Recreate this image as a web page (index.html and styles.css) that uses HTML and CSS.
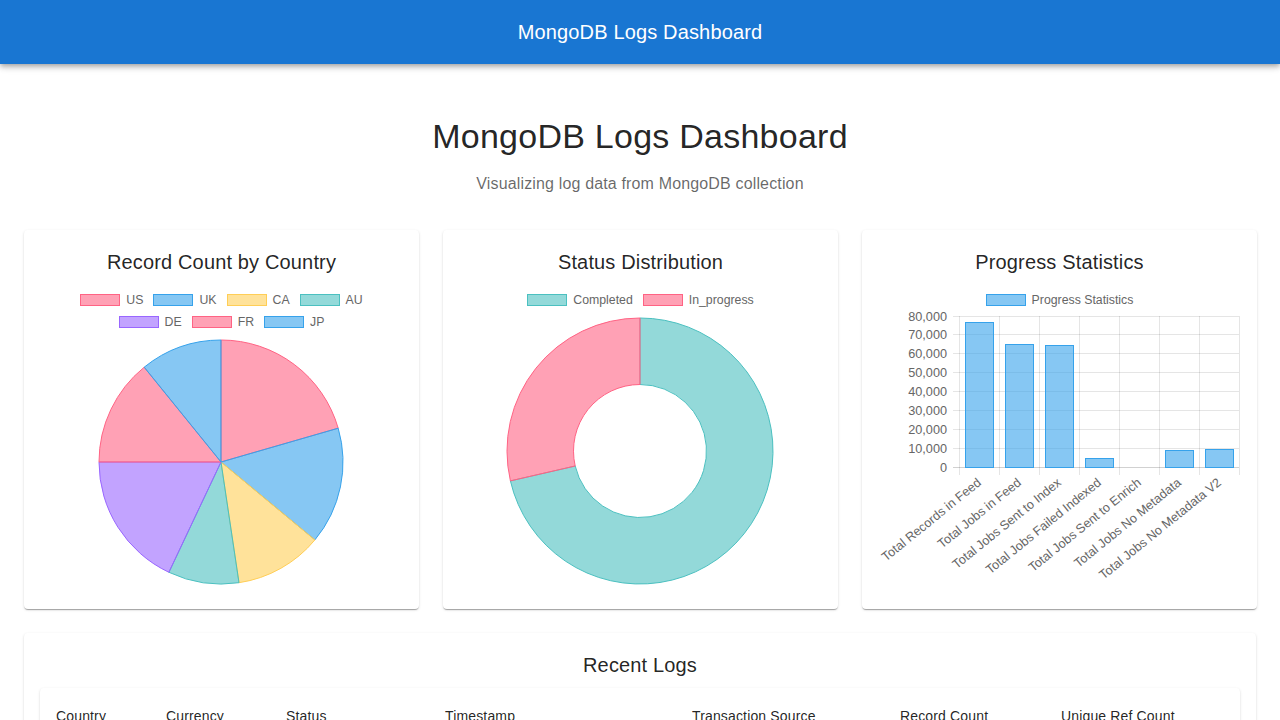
FILE: index.html
```html
<!DOCTYPE html>
<html lang="en">
<head>
<meta charset="utf-8">
<title>MongoDB Logs Dashboard</title>
<link rel="stylesheet" href="styles.css">
</head>
<body>
<header class="appbar">
  <div class="appbar-title">MongoDB Logs Dashboard</div>
</header>

<main class="main">
  <section class="intro">
    <h1 class="page-title">MongoDB Logs Dashboard</h1>
    <p class="page-subtitle">Visualizing log data from MongoDB collection</p>
  </section>

  <section class="cards">
    <div class="card">
      <h2 class="card-title">Record Count by Country</h2>
      <div class="chart">
        <div class="legend legend-wrap">
          <span class="legend-item"><i class="swatch sw-pink"></i>US</span>
          <span class="legend-item"><i class="swatch sw-blue"></i>UK</span>
          <span class="legend-item"><i class="swatch sw-yellow"></i>CA</span>
          <span class="legend-item"><i class="swatch sw-teal"></i>AU</span>
          <span class="legend-item"><i class="swatch sw-purple"></i>DE</span>
          <span class="legend-item"><i class="swatch sw-pink"></i>FR</span>
          <span class="legend-item"><i class="swatch sw-blue"></i>JP</span>
        </div>
        <svg class="plot plot-pie" width="363" height="255">
          <path class="s-pink" d="M181,124 L181,2 A122,122 0 0 1 298.2,90.2 Z"/>
          <path class="s-blue" d="M181,124 L298.2,90.2 A122,122 0 0 1 274.9,201.9 Z"/>
          <path class="s-yellow" d="M181,124 L274.9,201.9 A122,122 0 0 1 199,244.7 Z"/>
          <path class="s-teal" d="M181,124 L199,244.7 A122,122 0 0 1 128.9,234.3 Z"/>
          <path class="s-purple" d="M181,124 L128.9,234.3 A122,122 0 0 1 59,124 Z"/>
          <path class="s-pink" d="M181,124 L59,124 A122,122 0 0 1 104.2,29.2 Z"/>
          <path class="s-blue" d="M181,124 L104.2,29.2 A122,122 0 0 1 181,2 Z"/>
        </svg>
      </div>
    </div>

    <div class="card">
      <h2 class="card-title">Status Distribution</h2>
      <div class="chart">
        <div class="legend">
          <span class="legend-item"><i class="swatch sw-teal"></i>Completed</span>
          <span class="legend-item"><i class="swatch sw-pink"></i>In_progress</span>
        </div>
        <svg class="plot plot-donut" width="363" height="277">
          <path class="s-teal" d="M181,2 A133,133 0 1 1 51.4,164.9 L116.2,150 A66.5,66.5 0 1 0 181,68.5 Z"/>
          <path class="s-pink" d="M51.4,164.9 A133,133 0 0 1 181,2 L181,68.5 A66.5,66.5 0 0 0 116.2,150 Z"/>
        </svg>
      </div>
    </div>

    <div class="card">
      <h2 class="card-title">Progress Statistics</h2>
      <div class="chart">
        <div class="legend">
          <span class="legend-item"><i class="swatch sw-blue"></i>Progress Statistics</span>
        </div>
        <svg class="plot plot-bar" width="363" height="277">
          <g class="grid">
            <line x1="75" y1="0" x2="361" y2="0"/>
            <line x1="75" y1="18.9" x2="361" y2="18.9"/>
            <line x1="75" y1="37.75" x2="361" y2="37.75"/>
            <line x1="75" y1="56.6" x2="361" y2="56.6"/>
            <line x1="75" y1="75.5" x2="361" y2="75.5"/>
            <line x1="75" y1="94.4" x2="361" y2="94.4"/>
            <line x1="75" y1="113.25" x2="361" y2="113.25"/>
            <line x1="75" y1="132.1" x2="361" y2="132.1"/>
            <line x1="81" y1="0" x2="81" y2="159"/>
            <line x1="121" y1="0" x2="121" y2="159"/>
            <line x1="161" y1="0" x2="161" y2="159"/>
            <line x1="201" y1="0" x2="201" y2="159"/>
            <line x1="241" y1="0" x2="241" y2="159"/>
            <line x1="281" y1="0" x2="281" y2="159"/>
            <line x1="321" y1="0" x2="321" y2="159"/>
            <line x1="361" y1="0" x2="361" y2="159"/>
          </g>
          <line class="axis" x1="75" y1="151" x2="361" y2="151"/>
          <g class="ylabels">
            <text x="69" y="4.5">80,000</text>
            <text x="69" y="23.4">70,000</text>
            <text x="69" y="42.25">60,000</text>
            <text x="69" y="61.1">50,000</text>
            <text x="69" y="80">40,000</text>
            <text x="69" y="98.9">30,000</text>
            <text x="69" y="117.75">20,000</text>
            <text x="69" y="136.6">10,000</text>
            <text x="69" y="155.5">0</text>
          </g>
          <g class="bars">
            <rect x="87" y="6" width="28" height="145"/>
            <rect x="127" y="28" width="28" height="123"/>
            <rect x="167" y="29.5" width="28" height="121.5"/>
            <rect x="207" y="142" width="28" height="9"/>
            <rect x="287" y="134" width="28" height="17"/>
            <rect x="327" y="133" width="28" height="18"/>
          </g>
          <g class="xlabels">
            <text transform="translate(104,168) rotate(-39)">Total Records in Feed</text>
            <text transform="translate(144,168) rotate(-39)">Total Jobs in Feed</text>
            <text transform="translate(184,168) rotate(-39)">Total Jobs Sent to Index</text>
            <text transform="translate(224,168) rotate(-39)">Total Jobs Failed Indexed</text>
            <text transform="translate(264,168) rotate(-39)">Total Jobs Sent to Enrich</text>
            <text transform="translate(304,168) rotate(-39)">Total Jobs No Metadata</text>
            <text transform="translate(344,168) rotate(-39)">Total Jobs No Metadata V2</text>
          </g>
        </svg>
      </div>
    </div>
  </section>

  <section class="card logs">
    <h2 class="card-title">Recent Logs</h2>
    <div class="table-paper">
      <table class="log-table">
        <colgroup>
          <col class="c-country"><col class="c-currency"><col class="c-status"><col class="c-time">
          <col class="c-source"><col class="c-count"><col class="c-unique">
        </colgroup>
        <thead>
          <tr>
            <th>Country</th><th>Currency</th><th>Status</th><th>Timestamp</th>
            <th>Transaction Source</th><th>Record Count</th><th>Unique Ref Count</th>
          </tr>
        </thead>
        <tbody>
          <tr><td>US</td><td>USD</td><td>completed</td><td>2024-05-12 10:23:45</td><td>feed</td><td>15,230</td><td>14,980</td></tr>
          <tr><td>UK</td><td>GBP</td><td>completed</td><td>2024-05-12 10:18:02</td><td>feed</td><td>12,410</td><td>12,105</td></tr>
          <tr><td>CA</td><td>CAD</td><td>in_progress</td><td>2024-05-12 10:11:37</td><td>api</td><td>6,820</td><td>6,702</td></tr>
        </tbody>
      </table>
    </div>
  </section>
</main>
</body>
</html>
```

FILE: styles.css
```css
* { box-sizing: border-box; }

html, body {
  margin: 0;
  padding: 0;
  background: #ffffff;
  font-family: "Liberation Sans", Arial, Helvetica, sans-serif;
  color: rgba(0, 0, 0, 0.87);
}

.appbar {
  height: 64px;
  background: #1976d2;
  color: #ffffff;
  display: flex;
  align-items: center;
  justify-content: center;
  box-shadow: 0 2px 4px -1px rgba(0,0,0,0.2), 0 4px 5px 0 rgba(0,0,0,0.14), 0 1px 10px 0 rgba(0,0,0,0.12);
  position: relative;
  z-index: 2;
}

.appbar-title {
  font-size: 20px;
  line-height: 32px;
  font-weight: 400;
  letter-spacing: 0.0075em;
}

.main {
  padding: 24px;
}

.intro {
  text-align: center;
  margin: 27px 0 34px;
}

.page-title {
  margin: 0 0 15px;
  font-size: 34px;
  line-height: 42px;
  font-weight: 400;
  letter-spacing: 0.00735em;
  color: rgba(0, 0, 0, 0.87);
}

.page-subtitle {
  margin: 0;
  font-size: 16px;
  line-height: 24px;
  letter-spacing: 0.00938em;
  color: rgba(0, 0, 0, 0.6);
}

.cards {
  display: grid;
  grid-template-columns: repeat(3, 1fr);
  gap: 24px;
  margin-bottom: 24px;
}

.card {
  background: #ffffff;
  border-radius: 4px;
  padding: 16px;
  box-shadow: 0 2px 1px -1px rgba(0,0,0,0.2), 0 1px 1px 0 rgba(0,0,0,0.14), 0 1px 3px 0 rgba(0,0,0,0.12);
}

.card-title {
  margin: 0 0 6px;
  font-size: 20px;
  line-height: 32px;
  font-weight: 400;
  letter-spacing: 0.0075em;
  text-align: center;
  color: rgba(0, 0, 0, 0.87);
}

.chart {
  height: 309px;
  display: flex;
  flex-direction: column;
}

.legend {
  display: flex;
  flex-wrap: wrap;
  justify-content: center;
  column-gap: 10px;
  row-gap: 10px;
  padding: 10px 0;
  font-size: 12.3px;
  line-height: 12px;
  color: #666666;
}

.legend-wrap {
  max-width: 320px;
  margin: 0 auto;
}

.legend-item {
  display: flex;
  align-items: center;
  gap: 6px;
  white-space: nowrap;
}

.swatch {
  display: block;
  width: 40px;
  height: 12px;
  border: 1px solid;
}

.sw-pink { background: rgba(255, 99, 132, 0.6); border-color: rgb(255, 99, 132); }
.sw-blue { background: rgba(54, 162, 235, 0.6); border-color: rgb(54, 162, 235); }
.sw-yellow { background: rgba(255, 206, 86, 0.6); border-color: rgb(255, 206, 86); }
.sw-teal { background: rgba(75, 192, 192, 0.6); border-color: rgb(75, 192, 192); }
.sw-purple { background: rgba(153, 102, 255, 0.6); border-color: rgb(153, 102, 255); }

.plot {
  display: block;
  overflow: visible;
  flex: none;
}

.plot path { stroke-width: 1; stroke-linejoin: round; }

.s-pink { fill: rgba(255, 99, 132, 0.6); stroke: rgb(255, 99, 132); }
.s-blue { fill: rgba(54, 162, 235, 0.6); stroke: rgb(54, 162, 235); }
.s-yellow { fill: rgba(255, 206, 86, 0.6); stroke: rgb(255, 206, 86); }
.s-teal { fill: rgba(75, 192, 192, 0.6); stroke: rgb(75, 192, 192); }
.s-purple { fill: rgba(153, 102, 255, 0.6); stroke: rgb(153, 102, 255); }

.grid line {
  stroke: rgba(0, 0, 0, 0.1);
  stroke-width: 1;
  shape-rendering: crispEdges;
}

.axis {
  stroke: rgba(0, 0, 0, 0.18);
  stroke-width: 1;
  shape-rendering: crispEdges;
}

.ylabels text,
.xlabels text {
  font-family: "Liberation Sans", Arial, Helvetica, sans-serif;
  font-size: 12.7px;
  fill: #666666;
  text-anchor: end;
}

.bars rect {
  fill: rgba(54, 162, 235, 0.6);
  stroke: rgb(54, 162, 235);
  stroke-width: 1;
  shape-rendering: crispEdges;
}

.logs .card-title {
  margin-bottom: 7px;
}

.table-paper {
  background: #ffffff;
  border-radius: 4px;
  overflow: hidden;
  box-shadow: 0 2px 1px -1px rgba(0,0,0,0.2), 0 1px 1px 0 rgba(0,0,0,0.14), 0 1px 3px 0 rgba(0,0,0,0.12);
}

.log-table {
  width: 100%;
  table-layout: fixed;
  border-collapse: collapse;
  font-size: 14px;
  line-height: 24px;
  letter-spacing: 0.01071em;
}

.log-table th,
.log-table td {
  text-align: left;
  padding: 16px;
  border-bottom: 1px solid rgb(224, 224, 224);
  color: rgba(0, 0, 0, 0.87);
}

.log-table th { font-weight: 500; }

.c-country { width: 110px; }
.c-currency { width: 120px; }
.c-status { width: 159px; }
.c-time { width: 247px; }
.c-source { width: 208px; }
.c-count { width: 161px; }
.c-unique { width: auto; }
```
